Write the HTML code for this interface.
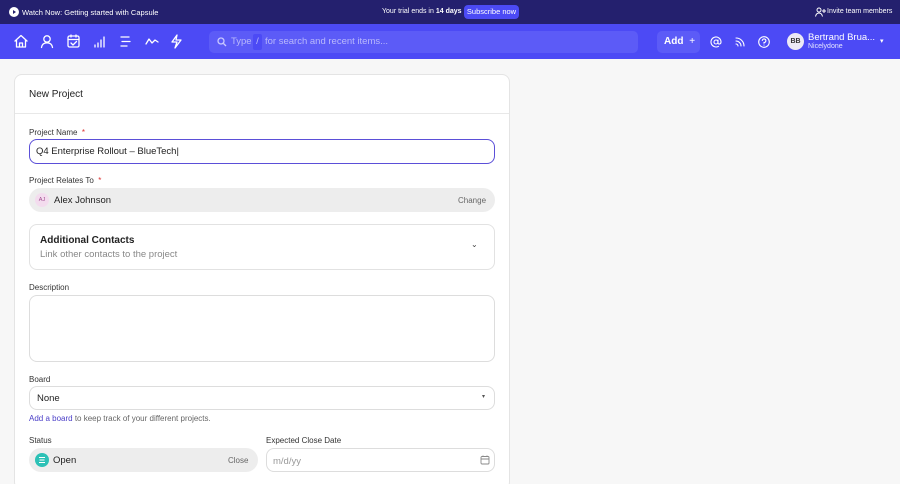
<!DOCTYPE html>
<html><head><meta charset="utf-8"><style>
*{box-sizing:border-box;margin:0;padding:0}
html,body{width:900px;height:484px;overflow:hidden}
body{background:#f7f7f7;font-family:"Liberation Sans",sans-serif;position:relative;color:#222}
.a{position:absolute;white-space:nowrap}
.top{left:0;top:0;width:900px;height:24px;background:#24206e;color:#fff;font-size:7px}
.nav{left:0;top:24px;width:900px;height:35px;background:#4c4af5}
.card{left:14px;top:74px;width:496px;height:416px;background:#fff;border:1px solid #e4e4e4;border-radius:8px}
.lbl{font-size:8px;color:#333}
.req{color:#d33}
.in{border:1px solid #ddd;border-radius:8px;background:#fff;font-size:9.5px}
svg{display:block}
</style></head><body>
<div class="a top">
  <svg class="a" style="left:9px;top:7px" width="10" height="10" viewBox="0 0 10 10"><circle cx="5" cy="5" r="5" fill="#fff"/><path d="M4 3L7 5L4 7Z" fill="#24206e"/></svg>
  <div class="a" style="left:22px;top:8px;font-size:7.5px">Watch Now: Getting started with Capsule</div>
  <div class="a" style="left:382px;top:8px">Your trial ends in <b>14 days</b></div>
  <div class="a" style="left:464px;top:5px;width:55px;height:14px;background:#4c4af5;border-radius:4px;text-align:center;line-height:14px;font-size:7.5px">Subscribe now</div>
  <svg class="a" style="left:815px;top:7px" width="11" height="10" viewBox="0 0 11 10" fill="none" stroke="#fff" stroke-width="1"><circle cx="4" cy="3" r="2"/><path d="M0.5 9.5C1 7 2.5 6 4 6S7 7 7.5 9.5M9 2v4M7 4h4"/></svg>
  <div class="a" style="left:827px;top:8px">Invite team members</div>
</div>
<div class="a nav">
  <svg class="a" style="left:14px;top:10px" width="175" height="15" viewBox="0 0 175 15" fill="none" stroke="#fff" stroke-width="1.3" stroke-linecap="round" stroke-linejoin="round">
    <path d="M1 7L7 1.5L13 7M2.5 6V13H11.5V6M5.5 13V9H8.5V13"/>
    <circle cx="33" cy="5" r="3.2"/><path d="M27.5 13.5C28 10 30 8.8 33 8.8S38 10 38.5 13.5"/>
    <rect x="54" y="2" width="11" height="11" rx="1.5"/><path d="M54 5.5H65M57 1V3M62 1V3M57 9L59 11L62.5 7.5"/>
    <path d="M81 13V11M84 13V9M87 13V6M90 13V3"/>
    <path d="M107 3H115M108 7.5H116M107 12H113"/>
    <path d="M132 10L135 5L138 9L141 6L144 8"/>
    <path d="M163 1L158 8H163L161 14L167 6H162Z"/>
  </svg>
  <div class="a" style="left:209px;top:7px;width:429px;height:22px;background:#5c5bf7;border-radius:5px;color:#b9b9fb;font-size:9.5px">
    <svg class="a" style="left:8px;top:6px" width="10" height="10" viewBox="0 0 10 10" fill="none" stroke="#c9c9ff" stroke-width="1.3"><circle cx="4" cy="4" r="3"/><path d="M6.5 6.5L9 9"/></svg>
    <span class="a" style="left:22px;top:5px">Type</span>
    <span class="a" style="left:44px;top:3px;width:9px;height:16px;background:#4c4af5;border-radius:2px;text-align:center;line-height:16px">/</span>
    <span class="a" style="left:56px;top:5px">for search and recent items...</span>
  </div>
  <div class="a" style="left:657px;top:7px;width:43px;height:22px;background:#5c5bf7;border-radius:5px;color:#fff;font-size:10px;font-weight:bold;line-height:22px;padding-left:7px">Add <span style="font-weight:normal;margin-left:3px">+</span></div>
  <svg class="a" style="left:710px;top:12px" width="64" height="12" viewBox="0 0 64 12" fill="none" stroke="#fff" stroke-width="1.1" stroke-linecap="round">
    <circle cx="6" cy="6" r="2"/><path d="M8 4V7C8 8.5 11 8.5 11 6A5 5 0 1 0 8.5 10.3"/>
    <path d="M26 2A8 8 0 0 1 34 10M26 5A5 5 0 0 1 31 10M26 8A2 2 0 0 1 28 10"/>
    <circle cx="54" cy="6" r="5.3"/><path d="M52.3 4.5A1.8 1.8 0 1 1 54 6.5V7.3M54 9V9.1"/>
  </svg>
  <div class="a" style="left:787px;top:9px;width:17px;height:17px;border-radius:50%;background:#ece9f5;color:#333;font-size:7px;font-weight:bold;text-align:center;line-height:17px">BB</div>
  <div class="a" style="left:808px;top:8px;color:#fff;font-size:9.5px">Bertrand Brua...</div>
  <div class="a" style="left:808px;top:19px;color:#e5e5ff;font-size:7px">Nicelydone</div>
  <div class="a" style="left:880px;top:13px;color:#fff;font-size:7px">▾</div>
</div>
<div class="a card">
  <div class="a" style="left:14px;top:14px;font-size:10px">New Project</div>
  <div class="a" style="left:0;top:38px;width:494px;height:1px;background:#e8e8e8"></div>
  <div class="a lbl" style="left:14px;top:53px">Project Name <span class="req">&nbsp;*</span></div>
  <div class="a in" style="left:14px;top:64px;width:466px;height:25px;border:1.5px solid #5b4fd8;padding:6px 0 0 6px;color:#222">Q4 Enterprise Rollout – BlueTech|</div>
  <div class="a lbl" style="left:14px;top:101px">Project Relates To <span class="req">&nbsp;*</span></div>
  <div class="a" style="left:14px;top:113px;width:466px;height:24px;background:#ededed;border-radius:12px;font-size:9.5px">
    <div class="a" style="left:6px;top:5px;width:14px;height:14px;border-radius:50%;background:#f3dcee;color:#a04c8f;font-size:5.5px;text-align:center;line-height:14px">AJ</div>
    <div class="a" style="left:25px;top:7px">Alex Johnson</div>
    <div class="a" style="left:429px;top:8px;font-size:8px;color:#666">Change</div>
  </div>
  <div class="a in" style="left:14px;top:149px;width:466px;height:46px;border-color:#e2e2e2">
    <div class="a" style="left:10px;top:10px;font-size:10px;color:#222;font-weight:600">Additional Contacts</div>
    <div class="a" style="left:10px;top:24px;font-size:9.5px;color:#888">Link other contacts to the project</div>
    <div class="a" style="left:441px;top:15px;font-size:8px;color:#444">⌄</div>
  </div>
  <div class="a lbl" style="left:14px;top:208px">Description</div>
  <div class="a in" style="left:14px;top:220px;width:466px;height:67px"></div>
  <div class="a lbl" style="left:14px;top:300px">Board</div>
  <div class="a in" style="left:14px;top:311px;width:466px;height:24px;padding:6px 0 0 7px">None<span class="a" style="left:452px;top:6px;font-size:6px;color:#555">▾</span></div>
  <div class="a" style="left:14px;top:339px;font-size:8px;color:#666"><span style="color:#4b3fc8">Add a board</span> to keep track of your different projects.</div>
  <div class="a lbl" style="left:14px;top:361px">Status</div>
  <div class="a" style="left:14px;top:373px;width:229px;height:24px;background:#ededed;border-radius:12px;font-size:9.5px">
    <svg class="a" style="left:6px;top:5px" width="14" height="14" viewBox="0 0 14 14"><circle cx="7" cy="7" r="7" fill="#2cc1b6"/><path d="M4 4.5H10M4.5 7H9.5M4 9.5H10" stroke="#fff" stroke-width="1"/></svg>
    <div class="a" style="left:24px;top:7px">Open</div>
    <div class="a" style="left:199px;top:8px;font-size:8px;color:#666">Close</div>
  </div>
  <div class="a lbl" style="left:251px;top:361px">Expected Close Date</div>
  <div class="a in" style="left:251px;top:373px;width:229px;height:24px;padding:7px 0 0 6px;color:#999">m/d/yy
    <svg class="a" style="left:213px;top:6px" width="10" height="10" viewBox="0 0 10 10" fill="none" stroke="#888" stroke-width="0.9"><rect x="1" y="1.5" width="8" height="7.5" rx="1"/><path d="M1 4H9M3 0.5V2M7 0.5V2"/></svg>
  </div>
</div>
</body></html>
